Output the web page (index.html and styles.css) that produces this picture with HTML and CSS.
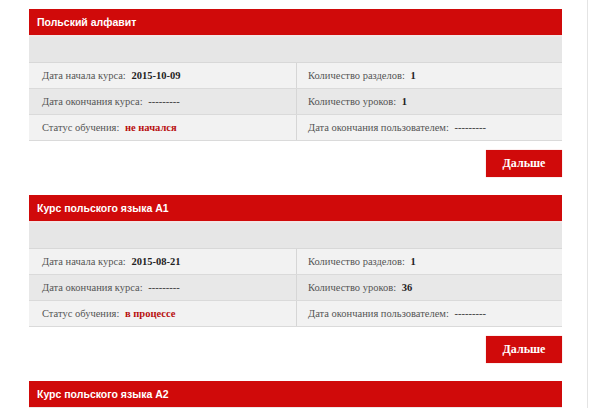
FILE: index.html
```html
<!DOCTYPE html>
<html lang="ru">
<head>
<meta charset="utf-8">
<link rel="stylesheet" href="styles.css">
</head>
<body>
<div class="page">
  <div class="course">
    <div class="course-head">Польский алфавит</div>
    <div class="course-sub"></div>
    <div class="info">
      <div class="row">
        <div class="cell">Дата начала курса: <b>2015-10-09</b></div>
        <div class="cell">Количество разделов: <b>1</b></div>
      </div>
      <div class="row alt">
        <div class="cell">Дата окончания курса: <span class="dash">---------</span></div>
        <div class="cell">Количество уроков: <b>1</b></div>
      </div>
      <div class="row">
        <div class="cell">Статус обучения: <b class="status">не начался</b></div>
        <div class="cell">Дата окончания пользователем: <span class="dash">---------</span></div>
      </div>
    </div>
    <div class="actions"><button class="btn">Дальше</button></div>
  </div>

  <div class="course">
    <div class="course-head">Курс польского языка А1</div>
    <div class="course-sub"></div>
    <div class="info">
      <div class="row">
        <div class="cell">Дата начала курса: <b>2015-08-21</b></div>
        <div class="cell">Количество разделов: <b>1</b></div>
      </div>
      <div class="row alt">
        <div class="cell">Дата окончания курса: <span class="dash">---------</span></div>
        <div class="cell">Количество уроков: <b>36</b></div>
      </div>
      <div class="row">
        <div class="cell">Статус обучения: <b class="status">в процессе</b></div>
        <div class="cell">Дата окончания пользователем: <span class="dash">---------</span></div>
      </div>
    </div>
    <div class="actions"><button class="btn">Дальше</button></div>
  </div>

  <div class="course">
    <div class="course-head">Курс польского языка А2</div>
  </div>
</div>
</body>
</html>
```

FILE: styles.css
```css
html, body {
  margin: 0;
  padding: 0;
  background: #fff;
}
body {
  font-family: "Liberation Serif", "Times New Roman", serif;
  font-size: 10.5px;
  color: #555;
  overflow: hidden;
}
.page {
  width: 588px;
  height: 408px;
  border-right: 1px solid #e4e4e4;
  padding: 9px 0 0 29px;
  box-sizing: border-box;
}
.course {
  width: 533px;
}
.course-head {
  height: 26px;
  background: #d00a0a;
  color: #fff;
  font-family: "Liberation Sans", Arial, sans-serif;
  font-weight: bold;
  font-size: 10.5px;
  line-height: 26px;
  padding-left: 8px;
  border-bottom: 2px solid #f1e6e6;
}
.course-sub {
  height: 25px;
  background: #e6e6e6;
  border-bottom: 1px solid #d8d8d8;
}
.row {
  display: grid;
  grid-template-columns: 267px 1fr;
  background: #f2f2f2;
  border-bottom: 1px solid #dadada;
}
.row.alt {
  background: #e8e8e8;
}
.cell {
  height: 25px;
  line-height: 25px;
  padding-left: 13px;
  white-space: nowrap;
}
.cell + .cell {
  border-left: 1px solid #d6d6d6;
  padding-left: 11px;
}
.cell b {
  color: #222;
  margin-left: 3px;
}
.cell .dash {
  color: #333;
  margin-left: 3px;
}
.cell b.status {
  color: #b80f0f;
}
.actions {
  display: flex;
  justify-content: flex-end;
  padding: 9px 0 18px;
}
.btn {
  width: 76px;
  height: 27px;
  border: 0;
  background: #d00a0a;
  color: #fff;
  font-family: "Liberation Serif", "Times New Roman", serif;
  font-weight: bold;
  font-size: 12px;
  padding: 0;
  box-shadow: 0 0 1px #e9a0a0;
}
```
